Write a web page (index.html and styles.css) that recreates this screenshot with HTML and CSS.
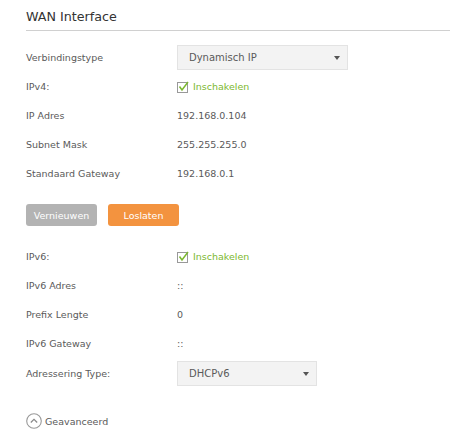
FILE: index.html
```html
<!DOCTYPE html>
<html>
<head>
<meta charset="utf-8">
<link rel="stylesheet" href="styles.css">
</head>
<body>
<div class="page">
  <h2 class="title">WAN Interface</h2>
  <div class="form">
    <div class="row select-row">
      <div class="label">Verbindingstype</div>
      <div class="select wide"><span>Dynamisch IP</span><i class="arrow"></i></div>
    </div>
    <div class="row">
      <div class="label">IPv4:</div>
      <div class="check"><svg width="12" height="12" viewBox="0 0 12 12"><rect x="0.5" y="1.5" width="10" height="10" fill="#fff" stroke="#999"/><path d="M2.5 5.5 L5 9 L11 1" fill="none" stroke="#7cb82f" stroke-width="1.5"/></svg><span>Inschakelen</span></div>
    </div>
    <div class="row">
      <div class="label">IP Adres</div>
      <div class="value">192.168.0.104</div>
    </div>
    <div class="row">
      <div class="label">Subnet Mask</div>
      <div class="value">255.255.255.0</div>
    </div>
    <div class="row">
      <div class="label">Standaard Gateway</div>
      <div class="value">192.168.0.1</div>
    </div>
    <div class="buttons">
      <button class="btn gray">Vernieuwen</button>
      <button class="btn orange">Loslaten</button>
    </div>
    <div class="row">
      <div class="label">IPv6:</div>
      <div class="check"><svg width="12" height="12" viewBox="0 0 12 12"><rect x="0.5" y="1.5" width="10" height="10" fill="#fff" stroke="#999"/><path d="M2.5 5.5 L5 9 L11 1" fill="none" stroke="#7cb82f" stroke-width="1.5"/></svg><span>Inschakelen</span></div>
    </div>
    <div class="row">
      <div class="label">IPv6 Adres</div>
      <div class="value">::</div>
    </div>
    <div class="row">
      <div class="label">Prefix Lengte</div>
      <div class="value">0</div>
    </div>
    <div class="row">
      <div class="label">IPv6 Gateway</div>
      <div class="value">::</div>
    </div>
    <div class="row select-row">
      <div class="label">Adressering Type:</div>
      <div class="select narrow"><span>DHCPv6</span><i class="arrow"></i></div>
    </div>
    <div class="advanced">
      <svg width="16" height="16" viewBox="0 0 16 16"><circle cx="8" cy="8" r="7.3" fill="none" stroke="#999" stroke-width="1.1"/><path d="M4.8 9.5 L8 6.3 L11.2 9.5" fill="none" stroke="#888" stroke-width="1.2"/></svg>
      <span>Geavanceerd</span>
    </div>
  </div>
</div>
</body>
</html>
```
FILE: styles.css
```css
html, body {
  margin: 0;
  padding: 0;
  background: #fff;
}
body {
  font-family: "DejaVu Sans", Verdana, sans-serif;
  font-size: 9.5px;
  color: #5a5a5a;
}
.page {
  padding: 0 0 0 26px;
}
.title {
  margin: 0;
  font-size: 12.7px;
  font-weight: normal;
  color: #333;
  height: 30px;
  line-height: 33px;
  border-bottom: 1px solid #d0d0d0;
}
.form {
  padding-top: 13px;
}
.row {
  display: flex;
  align-items: center;
  height: 29px;
}
.select-row {
  height: 26px;
  margin-bottom: 2px;
}
.row + .select-row {
  margin-top: 2px;
}
.label {
  width: 151px;
  flex: none;
}
.select {
  box-sizing: border-box;
  height: 25px;
  background: #f3f3f3;
  border: 1px solid #e3e3e3;
  display: flex;
  align-items: center;
  padding: 0 7px 0 11px;
  justify-content: space-between;
  color: #5a5a5a;
  font-size: 10px;
}
.select.wide { width: 171px; }
.select.narrow { width: 140px; }
.arrow {
  width: 0;
  height: 0;
  border-left: 3.5px solid transparent;
  border-right: 3.5px solid transparent;
  border-top: 4.5px solid #555;
  margin-top: 2px;
}
.check {
  display: flex;
  align-items: center;
  gap: 4px;
  color: #7cb82f;
}
.check svg { display: block; }
.buttons {
  display: flex;
  gap: 11px;
  padding: 16px 0 16px;
}
.btn {
  width: 71px;
  height: 22px;
  border: none;
  border-radius: 3px;
  font-family: inherit;
  font-size: 9.5px;
  color: #fff;
  padding: 0;
}
.btn.gray { background: #b3b3b3; }
.btn.orange { background: #f3933f; }
.advanced {
  display: flex;
  align-items: center;
  gap: 3px;
  margin-top: 27px;
}
.advanced svg { display: block; }
```
